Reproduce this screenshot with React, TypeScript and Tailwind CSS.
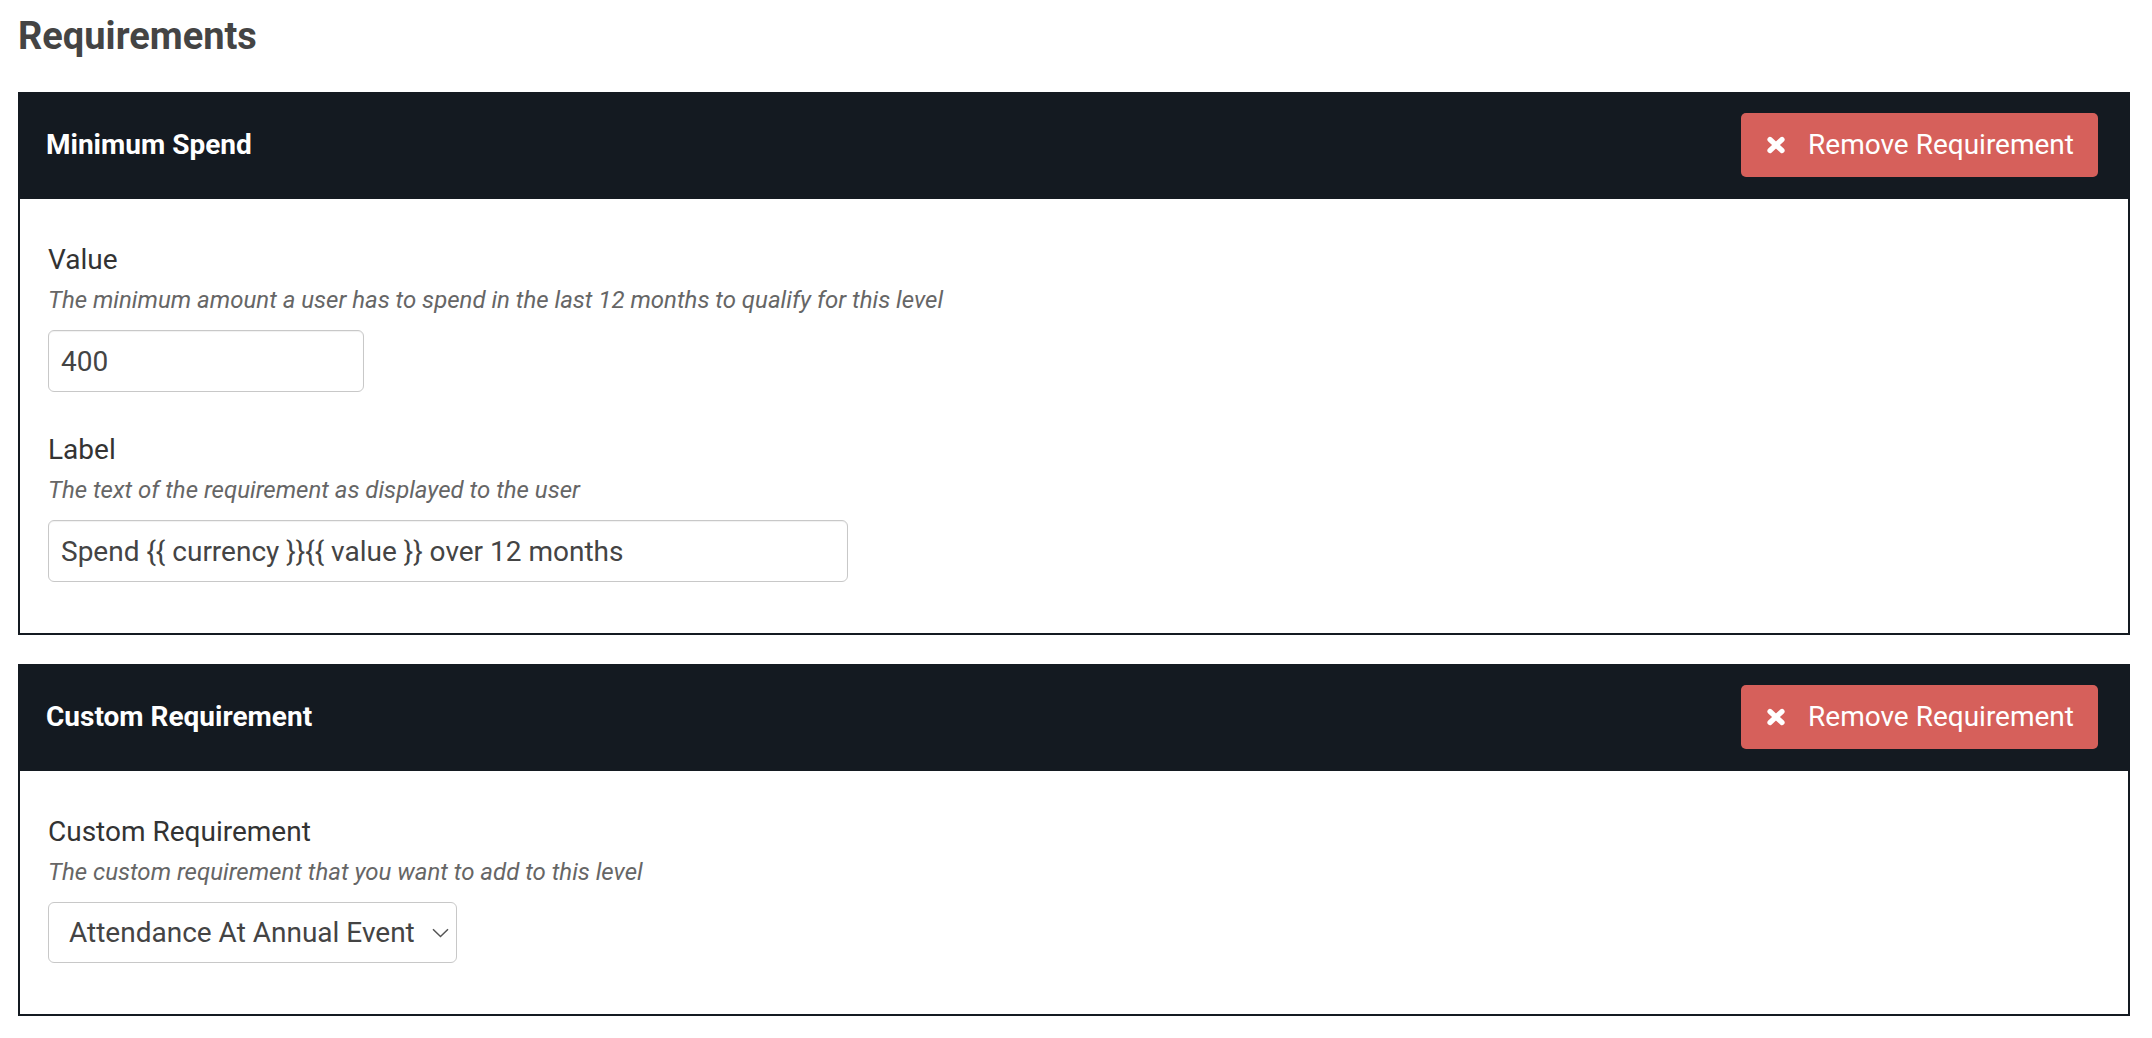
import React, { FC } from "react";

interface CardProps {
  title: string;
  children: React.ReactNode;
}

const TimesIcon: FC = () => (
  <svg width="20" height="18" viewBox="0 0 20 18" className="mr-[22px]">
    <path d="M4 3.5 L16 14.5 M16 3.5 L4 14.5" stroke="white" strokeWidth="5.2" strokeLinecap="round" />
  </svg>
);

const RequirementCard: FC<CardProps> = ({ title, children }) => {
  return (
    <section className="border-2 border-[#141a21] bg-white">
      <header className="flex items-center justify-between bg-[#141a21] pl-[26px] pr-[30px] pt-[19px] pb-[22px]">
        <h3 className="text-[28px] font-bold text-white leading-none">{title}</h3>
        <button className="flex h-[64px] items-center rounded-[5px] bg-[#d6605b] pl-[25px] pr-[24px] text-[28px] text-white">
          <TimesIcon />
          <span>Remove Requirement</span>
        </button>
      </header>
      <div className="px-[28px] pt-[40px] pb-[51px] space-y-[37px]">{children}</div>
    </section>
  );
};

interface FieldProps {
  label: string;
  help: string;
  children: React.ReactNode;
}

const Field: FC<FieldProps> = ({ label, help, children }) => {
  return (
    <div>
      <label className="block text-[28px] leading-[42px] text-[#333]">{label}</label>
      <p className="mt-[1px] text-[24px] italic leading-[36px] text-[#666]">{help}</p>
      <div className="mt-[12px]">{children}</div>
    </div>
  );
};

const App: FC = () => {
  return (
    <div className="min-h-screen bg-white pl-[18px] pr-[22px] pt-[14px] font-['Roboto',sans-serif]">
      <h2 className="mb-[34px] text-[38px] font-bold leading-[44px] text-[#444]">Requirements</h2>

      <div className="space-y-[29px]">
        <RequirementCard title="Minimum Spend">
          <Field
            label="Value"
            help="The minimum amount a user has to spend in the last 12 months to qualify for this level"
          >
            <input
              defaultValue="400"
              className="h-[62px] w-[316px] rounded-[6px] border border-[#c8c8c8] px-[12px] text-[28px] text-[#444] outline-none shadow-[inset_0_1px_1px_rgba(0,0,0,0.06)]"
            />
          </Field>
          <Field label="Label" help="The text of the requirement as displayed to the user">
            <input
              defaultValue="Spend {{ currency }}{{ value }} over 12 months"
              className="h-[62px] w-[800px] rounded-[6px] border border-[#c8c8c8] px-[12px] text-[28px] text-[#444] outline-none shadow-[inset_0_1px_1px_rgba(0,0,0,0.06)]"
            />
          </Field>
        </RequirementCard>

        <RequirementCard title="Custom Requirement">
          <Field
            label="Custom Requirement"
            help="The custom requirement that you want to add to this level"
          >
            <div className="relative w-[409px]">
              <select className="h-[61px] w-full appearance-none rounded-[6px] border border-[#c8c8c8] bg-white pl-[20px] pr-[40px] text-[28px] text-[#444] outline-none">
                <option>Attendance At Annual Event</option>
              </select>
              <svg
                className="pointer-events-none absolute right-[8px] top-1/2 -translate-y-1/2"
                width="17"
                height="10"
                viewBox="0 0 17 10"
                fill="none"
              >
                <polyline points="1,1.2 8.5,8.5 16,1.2" stroke="#555" strokeWidth="1.5" />
              </svg>
            </div>
          </Field>
        </RequirementCard>
      </div>
    </div>
  );
};

export default App;
